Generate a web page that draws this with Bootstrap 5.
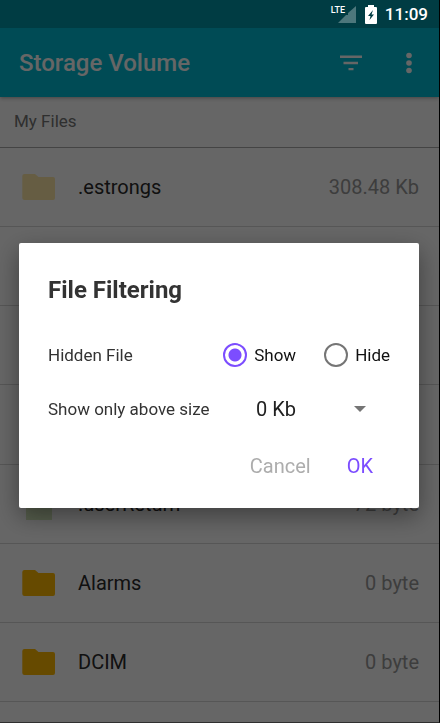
<!DOCTYPE html>
<html lang="en">
<head>
<meta charset="utf-8">
<meta name="viewport" content="width=device-width, initial-scale=1">
<title>Storage Volume</title>
<link href="https://cdn.jsdelivr.net/npm/bootstrap@5.3.0/dist/css/bootstrap.min.css" rel="stylesheet">
<style>
  body { font-family: Roboto, "Liberation Sans", sans-serif; background: #fff; color: #2b2b2b; }
  .screen { border-right: 1px solid #000; border-bottom: 1px solid #777; }
  .status-bar { height: 28px; background: #003c43; color: #fff; z-index: 1060; padding-right: 11px; }
  .lte-label { font-size: 9px; line-height: 10px; font-weight: 500; left: -2px; top: 0; }
  .signal { width: 24px; height: 19px; }
  .clock { font-size: 17px; line-height: 28px; font-weight: 500; }
  .app-bar { height: 69px; background: #00bcd4; padding: 0 18px 0 19px; box-shadow: 0 1px 4px rgba(0,0,0,.35); z-index: 1; }
  .app-title { font-size: 24px; line-height: 32px; font-weight: 500; color: #fff; }
  .icon-btn { line-height: 0; color: #fff; }
  .app-actions { gap: 34px; }
  .path-bar { height: 51px; padding: 0 14px; font-size: 17px; color: #757575; border-bottom: 1px solid #aaa; }
  .file-list { display: grid; grid-template-rows: repeat(7, 1fr) 20px; }
  .file-row { padding: 0 20px 0 22px; font-size: 20px; border-bottom: 1px solid #d6d6d6; gap: 22px; }
  .file-row:last-child { border-bottom: 0; }
  .file-size { color: #999; }
  .faded { opacity: .35; }
  .scrim { background: rgba(0,0,0,.6); padding: 28px 21px 0 19px; z-index: 1050; }
  .filter-dialog { background: #fff; border-radius: 2px; padding: 31px 29px 28px; box-shadow: 0 8px 24px rgba(0,0,0,.4); color: #333; }
  .dialog-title { font-size: 24px; line-height: 32px; font-weight: 700; margin-bottom: 22px; }
  .option-row { min-height: 54px; font-size: 17px; line-height: 24px; }
  .radio-group { gap: 28px; color: #111; }
  .radio-item { gap: 7px; }
  .radio-dot { appearance: none; width: 24px; height: 24px; margin: 0; border: 2px solid #757575; border-radius: 50%; }
  .radio-dot:checked { border-color: #7c4dff; background: radial-gradient(circle, #7c4dff 6px, #fff 7px); }
  .size-picker { width: 110px; }
  .size-select { appearance: none; font-size: 20px; line-height: 28px; color: #212121; background: transparent; }
  .picker-arrow { right: 0; top: 11px; pointer-events: none; }
  .actions { gap: 36px; padding-right: 17px; margin-top: 16px; }
  .action-btn { font-size: 20px; line-height: 28px; color: #7c4dff; }
  .action-muted { color: #adadad; }
</style>
<script src="https://cdn.jsdelivr.net/npm/bootstrap@5.3.0/dist/js/bootstrap.bundle.min.js"></script>
</head>
<body>
<div class="screen vh-100 overflow-hidden d-flex flex-column">
  <div class="status-bar position-relative d-flex align-items-center justify-content-end flex-shrink-0">
    <div class="signal position-relative me-2">
      <span class="lte-label position-absolute">LTE</span>
      <svg width="24" height="19" viewBox="0 0 24 19" class="d-block" aria-hidden="true"><path d="M23 1V18H5L13 10H15V8Z" fill="#4d777c"/></svg>
    </div>
    <svg width="12" height="19" viewBox="0 0 12 19" class="d-block me-2" aria-hidden="true"><path d="M3 0H9V2H11Q12 2 12 3V18Q12 19 11 19H1Q0 19 0 18V3Q0 2 1 2H3Z" fill="#fff"/><path d="M8 5L3 11H5.500L4.500 15L9 9.500H6.500Z" fill="#003c43"/></svg>
    <span class="clock">11:09</span>
  </div>

  <header class="app-bar position-relative d-flex align-items-center flex-shrink-0">
    <h1 class="app-title mb-0 me-auto">Storage Volume</h1>
    <div class="app-actions d-flex">
      <button type="button" class="icon-btn btn p-0 border-0" aria-label="Filter">
        <svg width="24" height="24" viewBox="0 0 24 24" aria-hidden="true"><path d="M1 4.500H23V7H1ZM4.500 10.700H19V13.200H4.500ZM9.500 17H14.500V19.200H9.500Z" fill="currentColor"/></svg>
      </button>
      <button type="button" class="icon-btn btn p-0 border-0" aria-label="More options">
        <svg width="24" height="24" viewBox="0 0 24 24" aria-hidden="true"><g fill="currentColor"><circle cx="12" cy="4.500" r="2.800"/><circle cx="12" cy="12" r="2.800"/><circle cx="12" cy="19.500" r="2.800"/></g></svg>
      </button>
    </div>
  </header>

  <nav class="path-bar d-flex align-items-center flex-shrink-0">My Files</nav>

  <svg class="d-none" aria-hidden="true">
    <symbol id="folder" viewBox="0 0 34 28"><path d="M2.500 1H13L16.500 4H31Q33 4 33 6V25Q33 27 31 27H2.500Q.3 27 .3 25V3Q.3 1 2.500 1Z"/></symbol>
  </svg>
  <main class="file-list flex-grow-1">
    <div class="file-row d-flex align-items-center">
      <svg class="faded" width="34" height="28" fill="#ffc107" aria-hidden="true"><use href="#folder"/></svg>
      <span class="me-auto">.estrongs</span><span class="file-size">308.48 Kb</span>
    </div>
    <div class="file-row"></div>
    <div class="file-row"></div>
    <div class="file-row"></div>
    <div class="file-row d-flex align-items-center">
      <svg class="faded" width="34" height="34" viewBox="0 0 34 34" fill="#8bc34a" aria-hidden="true"><path d="M4 1H22L30 9V33H4Z"/></svg>
      <span class="me-auto">.userReturn</span><span class="file-size">72 byte</span>
    </div>
    <div class="file-row d-flex align-items-center">
      <svg width="34" height="28" fill="#ffba00" aria-hidden="true"><use href="#folder"/></svg>
      <span class="me-auto">Alarms</span><span class="file-size">0 byte</span>
    </div>
    <div class="file-row d-flex align-items-center">
      <svg width="34" height="28" fill="#ffba00" aria-hidden="true"><use href="#folder"/></svg>
      <span class="me-auto">DCIM</span><span class="file-size">0 byte</span>
    </div>
    <div class="file-row"></div>
  </main>
</div>

<div class="scrim position-fixed top-0 bottom-0 start-0 end-0 d-flex align-items-center" role="dialog" aria-modal="true" aria-labelledby="dialogTitle">
  <form class="filter-dialog flex-grow-1">
    <h2 class="dialog-title" id="dialogTitle">File Filtering</h2>
    <div class="option-row d-flex align-items-center justify-content-between" role="radiogroup" aria-labelledby="hiddenLabel">
      <span id="hiddenLabel">Hidden File</span>
      <div class="radio-group d-flex">
        <div class="radio-item d-flex align-items-center"><input class="radio-dot" type="radio" name="hidden" id="showHidden" checked><label for="showHidden">Show</label></div>
        <div class="radio-item d-flex align-items-center"><input class="radio-dot" type="radio" name="hidden" id="hideHidden"><label for="hideHidden">Hide</label></div>
      </div>
    </div>
    <div class="option-row d-flex align-items-center justify-content-between">
      <label for="minSize">Show only above size</label>
      <div class="size-picker position-relative me-4">
        <select class="size-select border-0 w-100 p-0" id="minSize"><option>0 Kb</option></select>
        <svg class="picker-arrow position-absolute" width="12" height="6" viewBox="0 0 12 6" aria-hidden="true"><path d="M0 0H12L6 6Z" fill="#757575"/></svg>
      </div>
    </div>
    <div class="actions d-flex justify-content-end">
      <button type="button" class="action-btn action-muted btn p-0 border-0">Cancel</button>
      <button type="submit" class="action-btn btn p-0 border-0">OK</button>
    </div>
  </form>
</div>
</body>
</html>
